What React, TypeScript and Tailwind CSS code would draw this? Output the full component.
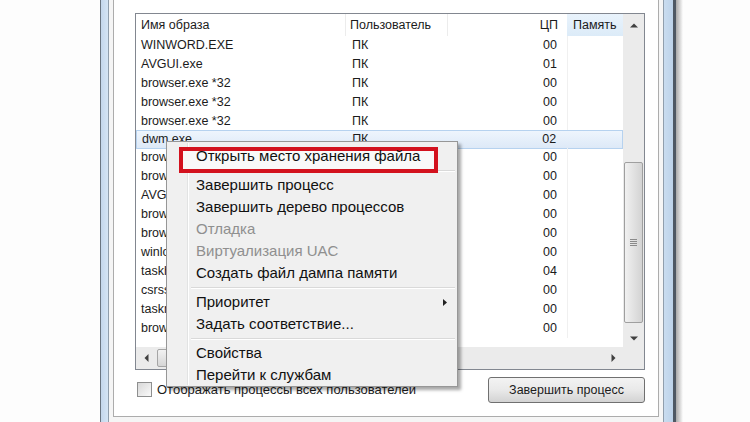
import React from "react";

const rows: [string, string, string][] = [
  ["WINWORD.EXE", "ПК", "00"],
  ["AVGUI.exe", "ПК", "01"],
  ["browser.exe *32", "ПК", "00"],
  ["browser.exe *32", "ПК", "00"],
  ["browser.exe *32", "ПК", "00"],
  ["dwm.exe", "ПК", "02"],
  ["browser.exe *32", "ПК", "00"],
  ["browser.exe *32", "ПК", "00"],
  ["AVGIDSAgent.exe", "ПК", "00"],
  ["browser.exe *32", "ПК", "00"],
  ["browser.exe *32", "ПК", "00"],
  ["winlogon.exe", "", "00"],
  ["taskhost.exe", "ПК", "04"],
  ["csrss.exe", "", "00"],
  ["taskmgr.exe", "ПК", "00"],
  ["browser.exe *32", "ПК", "00"],
];

function Tri({ dir }: { dir: "up" | "down" | "left" | "right" }) {
  if (dir === "up")
    return (
      <svg width="8" height="5" viewBox="0 0 8 5">
        <polygon points="0,4.5 4,0.5 8,4.5" fill="#404040" />
      </svg>
    );
  if (dir === "down")
    return (
      <svg width="8" height="5" viewBox="0 0 8 5">
        <polygon points="0,0.5 4,4.5 8,0.5" fill="#404040" />
      </svg>
    );
  if (dir === "left")
    return (
      <svg width="5" height="8" viewBox="0 0 5 8">
        <polygon points="4.5,0 0.5,4 4.5,8" fill="#404040" />
      </svg>
    );
  return (
    <svg width="5" height="8" viewBox="0 0 5 8">
      <polygon points="0.5,0 4.5,4 0.5,8" fill="#404040" />
    </svg>
  );
}

function MenuItem({ text, disabled, arrow }: { text: string; disabled?: boolean; arrow?: boolean }) {
  return (
    <div
      className={
        "relative h-[22px] flex items-center pl-[29px] pr-[10px] text-[15px] " +
        (disabled ? "text-[#8f8f8f]" : "text-[#111111]")
      }
    >
      <span className="flex-1 whitespace-nowrap">{text}</span>
      {arrow && (
        <svg width="4" height="7" viewBox="0 0 4 7">
          <polygon points="0,0 4,3.5 0,7" fill="#222" />
        </svg>
      )}
    </div>
  );
}

function Sep() {
  return (
    <div className="h-[7px] flex items-center pl-[24px] pr-[2px]">
      <div className="w-full h-[2px] border-t border-[#d9d9d9] border-b border-b-white" />
    </div>
  );
}

export default function App() {
  return (
    <div className="relative w-[750px] h-[422px] bg-white overflow-hidden flex font-['Liberation_Sans',Arial,sans-serif]">
      <div className="w-[100px] shrink-0 bg-[#fdfdfd]" />
      {/* window frame */}
      <div className="flex h-full shrink-0">
        <div className="w-px bg-[#6a7581]" />
        <div className="w-[7px] bg-gradient-to-r from-[#c4d7ec] to-[#d5e5f5]" />
        <div className="w-px bg-[#909eac]" />
        <div className="bg-[#f5f5f5] px-[4px] h-full">
          <div className="w-[546px] h-[417px] border-x border-b border-[#acacac] bg-white pl-[21px] pt-[13px] flex flex-col">
            {/* list box */}
            <div className="w-[510px] h-[357px] border border-[#828790] flex text-[12.5px] text-[#1b1b1b]">
              <div className="w-[487px] flex flex-col">
                {/* header */}
                <div className="h-[22px] flex items-center">
                  <div className="w-[210px] h-full flex items-center pl-[5px] border-r border-[#ececec]">Имя образа</div>
                  <div className="w-[102px] h-full flex items-center pl-[4px] border-r border-[#ececec] whitespace-nowrap">Пользователь</div>
                  <div className="w-[119px] h-full flex items-center justify-end pr-[9px]">ЦП</div>
                  <div className="w-[56px] h-full flex items-center pl-[6px] bg-gradient-to-b from-[#e9f3fc] to-[#dcebf8]">Память</div>
                </div>
                {/* body */}
                <div className="h-[311px] flex flex-col">
                  {rows.map((r, i) => (
                    <div
                      key={i}
                      className={
                        "h-[19px] shrink-0 flex items-center " +
                        (i === 5 ? "bg-gradient-to-b from-[#eef5fd] to-[#dde9f7] border border-[#b6d2ef] -my-px" : "")
                      }
                    >
                      <div className="w-[210px] pl-[5px] whitespace-nowrap overflow-hidden">{r[0]}</div>
                      <div className="w-[102px] pl-[6px]">{r[1]}</div>
                      <div className="w-[119px] text-right pr-[10px]">{r[2]}</div>
                      <div className={"w-[56px] h-full " + (i === 5 ? "" : "border-l border-[#f0f0f0]")} />
                    </div>
                  ))}
                </div>
                {/* horizontal scrollbar */}
                <div className="h-[22px] bg-[#ebebeb] flex items-center">
                  <div className="w-[21px] h-full flex items-center justify-center">
                    <Tri dir="left" />
                  </div>
                  <div className="w-[150px] h-[18px] rounded-[2px] border border-[#a5a5a5] bg-gradient-to-b from-[#f2f2f2] to-[#d6d6d6]" />
                  <div className="flex-1" />
                  <div className="w-[20px] h-full flex items-center justify-center">
                    <Tri dir="right" />
                  </div>
                </div>
              </div>
              {/* vertical scrollbar */}
              <div className="w-[21px] flex flex-col bg-[#ebebeb]">
                <div className="h-[22px] flex items-center justify-center">
                  <Tri dir="up" />
                </div>
                <div className="h-[126px]" />
                <div className="mx-[1px] h-[161px] rounded-[2px] border border-[#9f9f9f] bg-gradient-to-r from-[#f1f1f1] to-[#d3d3d3] flex flex-col items-center justify-center gap-[1px]">
                  <div className="w-[7px] h-px bg-[#8a8a8a]" />
                  <div className="w-[7px] h-px bg-[#8a8a8a]" />
                  <div className="w-[7px] h-px bg-[#8a8a8a]" />
                  <div className="w-[7px] h-px bg-[#8a8a8a]" />
                </div>
                <div className="flex-1" />
                <div className="h-[18px] flex items-center justify-center">
                  <Tri dir="down" />
                </div>
                <div className="h-[22px]" />
              </div>
            </div>
            {/* bottom row */}
            <div className="w-[510px] mt-[7px] flex items-start justify-between">
              <div className="flex items-center mt-[3px] pl-[2px] text-[13px] text-[#1b1b1b]">
                <div className="w-[15px] h-[15px] border border-[#8e8f8f] bg-gradient-to-br from-[#d8d8d8] to-[#fafafa]" />
                <span className="ml-[5px] whitespace-nowrap">Отображать процессы всех пользователей</span>
              </div>
              <div className="w-[157px] h-[26px] rounded-[3px] border border-[#707070] bg-gradient-to-b from-[#f3f3f3] via-[#e9e9e9] to-[#d3d3d3] flex items-center justify-center text-[12.5px] text-[#1b1b1b]">
                Завершить процесс
              </div>
            </div>
          </div>
        </div>
        <div className="w-px bg-[#909eac]" />
        <div className="w-[9px] bg-gradient-to-r from-[#c9dcef] to-[#bcd2e9]" />
        <div className="w-[3px] bg-[#4e5863]" />
        <div className="w-[7px] bg-gradient-to-r from-[#a9a9a9] to-[#fdfdfd]" />
      </div>
      <div className="flex-1 bg-[#fdfdfd]" />

      {/* context menu */}
      <div className="absolute left-[166px] top-[141px] w-[292px] h-[246px] bg-[#f0f0f0] border border-[#979797] shadow-[3px_3px_3px_rgba(0,0,0,0.35)] pt-[3px]">
        <div className="absolute left-[20px] top-[1px] bottom-[1px] w-[2px] border-l border-[#e2e3e3] border-r border-r-white" />
        <div className="absolute left-[12px] top-[5px] w-[259px] h-[26px] border-4 border-[#d3121e] bg-[#f9f9f9]" />
        <MenuItem text="Открыть место хранения файла" />
        <Sep />
        <MenuItem text="Завершить процесс" />
        <MenuItem text="Завершить дерево процессов" />
        <MenuItem text="Отладка" disabled />
        <MenuItem text="Виртуализация UAC" disabled />
        <MenuItem text="Создать файл дампа памяти" />
        <Sep />
        <MenuItem text="Приоритет" arrow />
        <MenuItem text="Задать соответствие..." />
        <Sep />
        <MenuItem text="Свойства" />
        <MenuItem text="Перейти к службам" />
      </div>
    </div>
  );
}
